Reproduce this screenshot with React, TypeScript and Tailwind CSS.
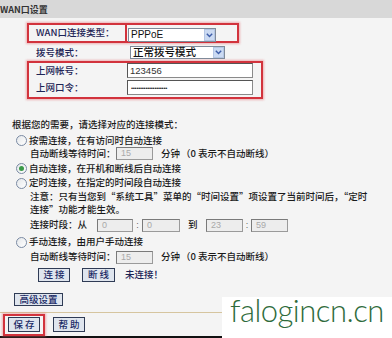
import React from "react";

const cjk = "font-['Noto_Sans_CJK_SC','Liberation_Sans',sans-serif]";
const lat = "font-['Liberation_Sans','Noto_Sans_CJK_SC',sans-serif]";

function Chevron() {
  return (
    <span className="flex h-full w-[11px] items-center justify-center border border-[#b4c6e4] bg-[#cbdaf2]">
      <svg width="7" height="5" viewBox="0 0 7 5">
        <path d="M0.8 0.8 L3.5 3.6 L6.2 0.8" fill="none" stroke="#3d5da8" strokeWidth="1.4" />
      </svg>
    </span>
  );
}

function Select({ text, w, size, latin }: { text: string; w: string; size: string; latin?: boolean }) {
  return (
    <div className={`flex items-stretch border border-[#7f8a99] bg-white ${w} ${size}`}>
      <span className={`flex flex-1 items-center pl-[2px] leading-none text-[#111] ${latin ? `${lat} text-[10px]` : "text-[10.5px]"}`}>
        {text}
      </span>
      <Chevron />
    </div>
  );
}

function Radio({ checked }: { checked?: boolean }) {
  return (
    <span className="flex h-[11px] w-[11px] items-center justify-center rounded-full border border-[#7a8aa3] bg-gradient-to-br from-[#e4e7ea] to-white">
      {checked && <span className="h-[5px] w-[5px] rounded-full bg-[#3a9a48]" />}
    </span>
  );
}

function Dis({ v, w }: { v: string; w: string }) {
  return (
    <span
      className={`flex h-[13px] items-center border border-[#9a9a9a] border-t-[#7a7a7a] border-l-[#7a7a7a] bg-[#ededed] pl-[4px] text-[9px] leading-none text-[#a9a9a9] ${lat} ${w}`}
    >
      {v}
    </span>
  );
}

function Btn({ children, w }: { children: React.ReactNode; w: string }) {
  return (
    <span
      className={`flex h-full items-center justify-center border border-[#2f3b55] bg-[#dfe5ee] text-[9.5px] font-medium leading-none text-[#1b2b66] ${w}`}
    >
      {children}
    </span>
  );
}

export default function App() {
  return (
    <div className={`relative h-[338px] w-[392px] overflow-hidden bg-[#f4f4f4] text-[9.5px] font-medium leading-none text-[#1a1a1a] ${cjk}`}>
      {/* header */}
      <div className="flex h-[18px] items-center bg-[#d8d8d8] text-[9px] font-bold text-[#333]">WAN口设置</div>

      {/* top form */}
      <div className="pl-[27px] pt-[5px] text-[#1d2456]">
        <div className="flex h-[20px] w-[212px] border-2 border-[#d2333d] shadow-[0_0_2px_1px_rgba(230,90,100,0.45)]">
          <div className="flex h-full w-[98px] items-center border-r-2 border-[#d2333d] pl-[7px]">WAN口连接类型：</div>
          <div className="ml-[1px] mt-[3px]">
            <Select text="PPPoE" w="w-[88px]" size="h-[14px]" latin />
          </div>
        </div>
        <div className="mt-[2px] flex h-[15px] items-center">
          <div className="w-[103px] pl-[9px]">拨号模式：</div>
          <Select text="正常拨号模式" w="w-[95px]" size="h-[13px]" />
        </div>
        <div className="mt-[1px] flex h-[38px] w-[236px] flex-col border-2 border-[#d2333d] shadow-[0_0_2px_1px_rgba(230,90,100,0.45)]">
          <div className="flex h-[15px] items-center">
            <div className="w-[98px] pl-[7px]">上网帐号：</div>
            <span
              className={`flex h-[15px] w-[126px] items-center border border-[#8a8a8a] border-t-[#555] border-l-[#555] bg-white pl-[2px] text-[9.5px] text-[#333] ${lat}`}
            >
              123456
            </span>
          </div>
          <div className="mt-[2px] flex h-[15px] items-center">
            <div className="w-[98px] pl-[7px]">上网口令：</div>
            <span
              className={`flex h-[15px] w-[126px] items-center overflow-hidden border border-[#8a8a8a] border-t-[#555] border-l-[#555] bg-white pl-[3px] text-[6px] tracking-[-0.3px] text-[#222] ${lat}`}
            >
              ••••••••••••••••••••
            </span>
          </div>
        </div>
      </div>

      {/* connection modes */}
      <div className="mt-[19px] flex h-[14px] items-center pl-[12px]">根据您的需要，请选择对应的连接模式：</div>

      <div className="mt-[2px] flex h-[13px] items-center gap-[2px] pl-[16px]">
        <Radio />
        <span>按需连接，在有访问时自动连接</span>
      </div>
      <div className="flex h-[13px] items-center pl-[30px]">
        <span className="w-[86px]">自动断线等待时间：</span>
        <Dis v="15" w="w-[37px]" />
        <span className="ml-[8px]">分钟</span>
        <span className="ml-[1px]">（0 表示不自动断线）</span>
      </div>
      <div className="mt-[1px] flex h-[15px] items-center gap-[2px] pl-[16px]">
        <Radio checked />
        <span>自动连接，在开机和断线后自动连接</span>
      </div>
      <div className="flex h-[14px] items-center gap-[2px] pl-[16px]">
        <Radio />
        <span>定时连接，在指定的时间段自动连接</span>
      </div>
      <div className="whitespace-nowrap pl-[30px] leading-[12.5px]">
        注意：只有当您到“系统工具”菜单的“时间设置”项设置了当前时间后，“定时
        <br />
        连接”功能才能生效。
      </div>
      <div className="mt-[3px] flex h-[14px] items-center pl-[30px]">
        <span className="w-[67px]">连接时段：从</span>
        <Dis v="0" w="w-[36px]" />
        <span className={`w-[9px] text-center text-[9px] text-[#666] ${lat}`}>:</span>
        <Dis v="0" w="w-[38px]" />
        <span className="ml-[8px] w-[18px]">到</span>
        <Dis v="23" w="w-[37px]" />
        <span className={`w-[8px] text-center text-[9px] text-[#666] ${lat}`}>:</span>
        <Dis v="59" w="w-[37px]" />
      </div>
      <div className="mt-[3px] flex h-[14px] items-center gap-[2px] pl-[16px]">
        <Radio />
        <span>手动连接，由用户手动连接</span>
      </div>
      <div className="mt-[1px] flex h-[14px] items-center pl-[30px]">
        <span className="w-[86px]">自动断线等待时间：</span>
        <Dis v="15" w="w-[37px]" />
        <span className="ml-[8px]">分钟</span>
        <span className="ml-[1px]">（0 表示不自动断线）</span>
      </div>

      <div className="mt-[4px] flex h-[14px] items-center pl-[38px]">
        <Btn w="w-[32px]">连 接</Btn>
        <span className="ml-[12px] h-full">
          <Btn w="w-[33px]">断 线</Btn>
        </span>
        <span className="ml-[10px] text-[#1b2456]">未连接！</span>
      </div>

      <div className="mt-[11px] flex h-[13px] pl-[14px]">
        <Btn w="w-[49px]">高级设置</Btn>
      </div>

      <div className="mt-[6px] h-[1px] bg-[#d6c59f]" />

      <div className="mt-[1px] flex h-[22px] items-start pl-[3px]">
        <div className="flex h-[22px] w-[42px] border-2 border-[#d2333d] pl-[3px] pt-[1px] shadow-[0_0_2px_1px_rgba(230,90,100,0.45)]">
          <span className="h-[15px]">
            <Btn w="w-[32px]">保 存</Btn>
          </span>
        </div>
        <span className="ml-[8px] mt-[3px] h-[15px]">
          <Btn w="w-[32px]">帮 助</Btn>
        </span>
      </div>
      <div className="h-[2px] bg-[#111]" />

      {/* watermark overlay */}
      <div className="absolute bottom-0 left-[222px] right-0 top-[297px] bg-white">
        <span className="absolute left-[8px] top-[-2px] font-['Lato',sans-serif] text-[31px] font-light leading-none tracking-[-0.5px] text-[#2e6b3b]">
          falogincn.cn
        </span>
      </div>
    </div>
  );
}
